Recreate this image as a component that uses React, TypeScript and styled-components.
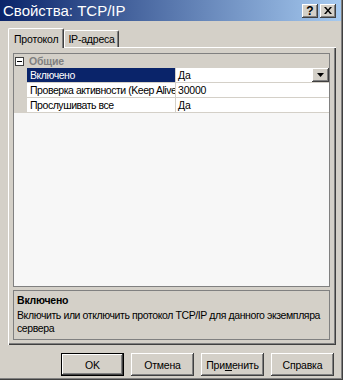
import React from 'react';
import styled, { createGlobalStyle } from 'styled-components';

const GlobalStyle = createGlobalStyle`
  html, body {
    margin: 0;
    padding: 0;
    background: #d4d0c8;
  }
  * {
    box-sizing: border-box;
  }
`;

const Window = styled.div`
  width: 343px;
  height: 380px;
  background: #d4d0c8;
  display: flex;
  flex-direction: column;
  font-family: "Liberation Sans", Arial, sans-serif;
  font-size: 10.5px;
  letter-spacing: -0.2px;
  color: #000;
  box-shadow: inset -1px -1px #404040, inset -2px -2px #808080;
  overflow: hidden;
`;

const TitleBar = styled.div`
  height: 21px;
  margin-right: 2px;
  display: flex;
  align-items: center;
  padding: 0 5px 0 3px;
  background: linear-gradient(to right, #0a246a, #a6caf0);
`;

const Title = styled.div`
  flex: 1;
  color: #fff;
  font-size: 15px;
  letter-spacing: 0;
  line-height: 21px;
  white-space: nowrap;
`;

const CaptionButton = styled.div`
  width: 16px;
  height: 14px;
  margin-left: 2px;
  background: #d4d0c8;
  display: flex;
  align-items: center;
  justify-content: center;
  font-weight: bold;
  font-size: 12px;
  letter-spacing: 0;
  line-height: 14px;
  box-shadow: inset -1px -1px #404040, inset 1px 1px #fff, inset -2px -2px #808080;
`;

const Content = styled.div`
  flex: 1;
  display: flex;
  flex-direction: column;
  padding: 7px 7px 0 8px;
`;

const TabStrip = styled.div`
  display: flex;
  align-items: flex-end;
  height: 19px;
  position: relative;
  z-index: 1;
`;

const Tab = styled.div<{ $active?: boolean }>`
  height: ${({ $active }) => ($active ? '20px' : '17px')};
  padding: ${({ $active }) => ($active ? '0 5px 0 5px' : '0 3px 0 3px')};
  margin-bottom: ${({ $active }) => ($active ? '-1px' : '0')};
  background: #d4d0c8;
  display: flex;
  align-items: center;
  white-space: nowrap;
  border-top: 1px solid #fff;
  border-left: 1px solid #fff;
  border-right: 1px solid #404040;
  border-top-left-radius: 2px;
  border-top-right-radius: 2px;
  box-shadow: inset -1px 0 #808080;
`;

const TabPanel = styled.div`
  height: 298px;
  width: 328px;
  display: flex;
  flex-direction: column;
  padding: 5px 6px 5px 4px;
  border-top: 1px solid #fff;
  border-left: 1px solid #fff;
  box-shadow: inset -1px -1px #404040, inset -2px -2px #808080;
`;

const Grid = styled.div`
  height: 234px;
  border: 1px solid #808080;
  background: #f7f7f7;
  display: flex;
  flex-direction: column;
`;

const CategoryRow = styled.div`
  height: 14px;
  background: #d4d0c8;
  display: flex;
  align-items: center;
  padding-left: 1px;
`;

const Expander = styled.div`
  width: 9px;
  height: 9px;
  border: 1px solid #404040;
  background: #fff;
  display: flex;
  align-items: center;
  justify-content: center;
  margin-right: 5px;
  &::after {
    content: '';
    width: 5px;
    height: 1px;
    background: #000;
  }
`;

const CategoryLabel = styled.div`
  color: #808080;
  font-weight: bold;
`;

const Row = styled.div`
  height: 15px;
  display: flex;
  border-bottom: 1px solid #d4d0c8;
`;

const Margin = styled.div`
  width: 13px;
  background: #d4d0c8;
`;

const LabelCell = styled.div<{ $selected?: boolean }>`
  width: 149px;
  padding-left: 3px;
  line-height: 14px;
  letter-spacing: -0.45px;
  white-space: nowrap;
  overflow: hidden;
  background: ${({ $selected }) => ($selected ? '#0a246a' : '#fff')};
  color: ${({ $selected }) => ($selected ? '#fff' : '#000')};
  border-right: 1px solid #d4d0c8;
`;

const ValueCell = styled.div`
  flex: 1;
  padding-left: 2px;
  line-height: 14px;
  background: #fff;
  display: flex;
  justify-content: space-between;
`;

const DropButton = styled.div`
  width: 17px;
  height: 14px;
  background: #d4d0c8;
  display: flex;
  align-items: center;
  justify-content: center;
  box-shadow: inset -1px -1px #404040, inset 1px 1px #fff, inset -2px -2px #808080;
`;

const Description = styled.div`
  margin-top: 3px;
  height: 50px;
  border: 1px solid #808080;
  padding: 3px 2px 0 3px;
  line-height: 13px;
  letter-spacing: -0.4px;
`;

const DescTitle = styled.div`
  font-weight: bold;
  letter-spacing: -0.2px;
  margin-bottom: 2px;
`;

const ButtonRow = styled.div`
  display: flex;
  justify-content: flex-end;
  gap: 7px;
  padding: 8px 2px 0 0;
`;

const Button = styled.div<{ $default?: boolean }>`
  width: 63px;
  height: 23px;
  display: flex;
  align-items: center;
  justify-content: center;
  background: #d4d0c8;
  box-shadow: ${({ $default }) =>
    $default
      ? 'inset 0 0 0 1px #000, inset -2px -2px #404040, inset 2px 2px #fff, inset -3px -3px #808080'
      : 'inset -1px -1px #404040, inset 1px 1px #fff, inset -2px -2px #808080'};
`;

const rows = [
  { label: 'Включено', value: 'Да', selected: true },
  { label: 'Проверка активности (Keep Alive)', value: '30000' },
  { label: 'Прослушивать все', value: 'Да' },
];

export default function App() {
  return (
    <>
      <GlobalStyle />
      <Window>
        <TitleBar>
          <Title>Свойства: TCP/IP</Title>
          <CaptionButton>?</CaptionButton>
          <CaptionButton>
            <svg width="8" height="7" viewBox="0 0 8 7">
              <path d="M0 0h2l2 2.5L6 0h2L5 3.5 8 7H6L4 4.5 2 7H0l3-3.5z" fill="#000" />
            </svg>
          </CaptionButton>
        </TitleBar>
        <Content>
          <TabStrip>
            <Tab $active>Протокол</Tab>
            <Tab>IP-адреса</Tab>
          </TabStrip>
          <TabPanel>
            <Grid>
              <CategoryRow>
                <Expander />
                <CategoryLabel>Общие</CategoryLabel>
              </CategoryRow>
              {rows.map((r) => (
                <Row key={r.label}>
                  <Margin />
                  <LabelCell $selected={r.selected}>{r.label}</LabelCell>
                  <ValueCell>
                    {r.value}
                    {r.selected && (
                      <DropButton>
                        <svg width="7" height="4" viewBox="0 0 7 4">
                          <path d="M0 0h7L3.5 4z" fill="#000" />
                        </svg>
                      </DropButton>
                    )}
                  </ValueCell>
                </Row>
              ))}
            </Grid>
            <Description>
              <DescTitle>Включено</DescTitle>
              Включить или отключить протокол TCP/IP для данного экземпляра сервера
            </Description>
          </TabPanel>
          <ButtonRow>
            <Button $default>OK</Button>
            <Button>Отмена</Button>
            <Button>
              <span>
                При<u>м</u>енить
              </span>
            </Button>
            <Button>Справка</Button>
          </ButtonRow>
        </Content>
      </Window>
    </>
  );
}
